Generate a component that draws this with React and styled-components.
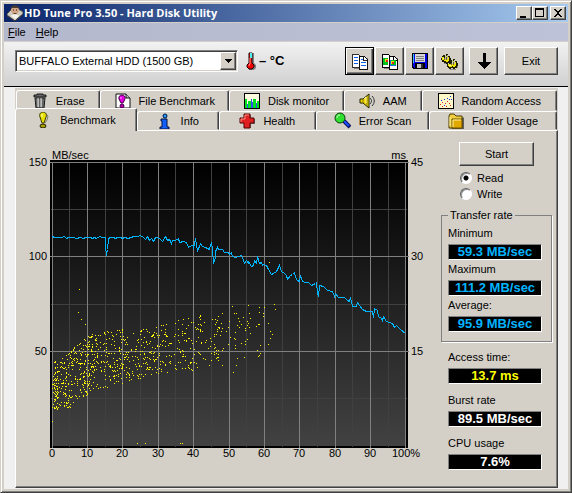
import { useState } from "react";
import styled, { createGlobalStyle, css } from "styled-components";


const App = () => {

    const [tab, setTab] = useState('Benchmark');
    const [mode, setMode] = useState('read');

    const renderTabs = (tabs) => tabs.map(({name, size, Icon}) => (
        <Tab
            key={name}
            type="button"
            role="tab"
            aria-selected={tab === name}
            $size={size}
            $active={tab === name}
            onClick={() => setTab(name)}
        >
            <Icon />
            {name}
        </Tab>
    ))

    return (
        <>
            <GlobalStyle />
            <Window>
                <TitleBar>
                    <DiskIcon />
                    <Title>HD Tune Pro 3.50 - Hard Disk Utility</Title>
                    <CaptionButton aria-label="Minimize"><MinimizeIcon /></CaptionButton>
                    <CaptionButton aria-label="Maximize"><MaximizeIcon /></CaptionButton>
                    <CaptionButton aria-label="Close" $apart><CloseIcon /></CaptionButton>
                </TitleBar>

                <MenuBar>
                    <MenuItem type="button"><u>F</u>ile</MenuItem>
                    <MenuItem type="button"><u>H</u>elp</MenuItem>
                </MenuBar>

                <Toolbar>
                    <DriveBox>
                        <DriveSelect aria-label="Drive">
                            <option>BUFFALO External HDD (1500 GB)</option>
                        </DriveSelect>
                        <DriveArrow>
                            <svg width="7" height="4" shapeRendering="crispEdges"><path d="M0 0h7v1h-1v1h-1v1h-1v1h-1v-1h-1v-1h-1v-1h-1z" /></svg>
                        </DriveArrow>
                    </DriveBox>
                    <Temperature>
                        <ThermometerIcon />
                        – °C
                    </Temperature>
                    <ToolGroup>
                        <ToolButton aria-label="Copy info" $focused><CopyIcon /></ToolButton>
                        <ToolButton aria-label="Copy screenshot"><CopyShotIcon /></ToolButton>
                        <ToolButton aria-label="Save"><SaveIcon /></ToolButton>
                        <ToolButton aria-label="Options"><OptionsIcon /></ToolButton>
                    </ToolGroup>
                    <ToolButton aria-label="Minimize to tray"><DownIcon /></ToolButton>
                    <ExitButton>Exit</ExitButton>
                </Toolbar>

                <Body>
                    <TabArea>
                        <TabRow role="tablist" $back>{renderTabs(backTabs)}</TabRow>
                        <TabRow role="tablist">{renderTabs(frontTabs)}</TabRow>
                        <Panel>
                            <ChartCell>
                                <Chart />
                            </ChartCell>
                            <Side>
                                <StartButton>Start</StartButton>
                                <Modes>
                                    <Mode>
                                        <Radio type="radio" name="mode" checked={mode === 'read'} onChange={() => setMode('read')} />
                                        Read
                                    </Mode>
                                    <Mode>
                                        <Radio type="radio" name="mode" checked={mode === 'write'} onChange={() => setMode('write')} />
                                        Write
                                    </Mode>
                                </Modes>
                                <Group>
                                    <Legend>Transfer rate</Legend>
                                    <Reading id="min" label="Minimum" value="59.3 MB/sec" color="#00b4ff" />
                                    <Reading id="max" label="Maximum" value="111.2 MB/sec" color="#00b4ff" />
                                    <Reading id="avg" label="Average:" value="95.9 MB/sec" color="#00b4ff" />
                                </Group>
                                <Readings>
                                    <Reading id="access" label="Access time:" value="13.7 ms" color="#ffff00" />
                                    <Reading id="burst" label="Burst rate" value="89.5 MB/sec" color="#ffffff" />
                                    <Reading id="cpu" label="CPU usage" value="7.6%" color="#ffffff" />
                                </Readings>
                            </Side>
                        </Panel>
                    </TabArea>
                </Body>
            </Window>
        </>
    );
}

export default App;


const Reading = ({id, label, value, color}) => (
    <ReadingBox>
        <label htmlFor={id}>{label}</label>
        <Value id={id} $color={color}>{value}</Value>
    </ReadingBox>
)


//Transfer rate curve, plot area is 354 x 284
const rateLine = `0,74 2,75 9,75 12,74 14,76 16,75 21,75 24,76 28,75 31,76 33,75 38,75 40,76 42,75 44,76 47,74 50,75
53,75 53,83 54,93 55,87 56,77 57,75 61,75 63,76 65,75 68,75 70,76 72,75 76,76 78,75 82,74 85,74 88,73 91,75 93,77 95,74
97,78 99,76 101,79 103,75 105,75 108,77 110,79 113,74 115,78 117,77 119,81 120,78 123,78 126,76 127,80 131,79 134,80
136,85 139,83 141,83 141,86 143,76 144,82 145,89 148,81 150,84 153,85 155,86 157,87 158,83 159,80 160,87 161,101
163,95 163,89 165,85 166,87 170,87 172,90 176,90 177,92 179,90 180,94 183,95 189,93 191,98 192,101 194,98 196,101
196,99 199,104 201,103 202,98 204,101 205,94 207,101 209,100 210,103 211,102 214,103 216,107 219,112 221,111 224,109
227,103 229,109 232,111 234,113 235,117 238,113 240,112 242,110 243,115 245,118 247,119 248,113 250,119 253,120
256,120 259,123 263,121 264,120 265,130 266,134 267,123 271,124 275,128 280,129 282,134 283,131 286,135 292,135
295,138 297,139 298,135 300,144 304,144 305,140 307,143 310,147 314,149 320,149 321,155 322,146 325,148 326,154
329,156 330,158 331,154 334,159 340,161 342,165 344,163 348,167 353,171`

//Access time samples that lie away from the main cloud
const looseDots = [
    [27,127],[26,150],[29,157],[33,162],[85,281],[93,281],[128,281],[130,281],[0,259],[217,100],
    [164,160],[163,162],[166,154],[170,151],[165,158],[165,169],[164,172],[169,161],[167,165],[170,166],[169,169],
    [168,173],[174,169],[176,165],[177,159],[180,144],[182,151],[184,151],[186,156],[187,159],[185,163],[187,165],
    [189,162],[178,175],[182,176],[183,177],[183,170],[183,183],[189,181],[176,182],[183,186],[191,155],[193,166],
    [193,168],[195,159],[196,161],[197,151],[196,143],[198,156],[195,163],[197,165],[198,171],[195,177],[193,179],
    [193,182],[164,188],[166,188],[171,186],[164,196],[165,195],[170,188],[170,203],[185,196],[184,203],[192,195],
    [181,210],[207,145],[212,145],[211,151],[211,154],[207,150],[206,162],[207,162],[204,164],[222,142],[223,147],
    [216,161],[218,169],[220,172],[218,176],[216,182],[208,183],[205,188],[208,191],[207,193],[206,194],
]

//from x, to x, upper and lower edge at both ends, number of samples
const clouds = [
    [0, 5, 212, 206, 248, 250, 45],
    [2, 18, 200, 189, 250, 245, 110],
    [18, 40, 187, 170, 245, 230, 165],
    [40, 72, 172, 166, 230, 220, 165],
    [72, 106, 171, 163, 221, 211, 140],
    [106, 140, 163, 154, 213, 208, 100],
    [140, 167, 154, 148, 209, 200, 60],
]

const makeDots = () => {
    let seed = 7;
    const random = () => {
        seed = (seed * 16807) % 2147483647;
        return seed / 2147483647;
    }
    const dots = [...looseDots];
    clouds.forEach(([x1, x2, top1, top2, low1, low2, count]) => {
        for (let i = 0; i < count; i++) {
            const t = random();
            const top = top1 + (top2 - top1) * t;
            const low = low1 + (low2 - low1) * t;
            dots.push([Math.round(x1 + (x2 - x1) * t), Math.round(top + (low - top) * random())]);
        }
    })
    return dots.map(([x, y]) => `M${x} ${y}h1v1h-1z`).join('');
}

const dotsPath = makeDots();

const columns = Array.from({length: 21}, (_, i) => Math.floor(i * 17.7));
const rows = [0, 47, 94, 142, 189, 236];

const Chart = () => (
    <ChartSvg viewBox="-36 -31 420 355" role="img" aria-label="Transfer rate and access time">
        <defs>
            <linearGradient id="plot" x1="0" y1="0" x2="0" y2="1">
                <stop offset="0" stopColor="#000" />
                <stop offset="1" stopColor="#424242" />
            </linearGradient>
        </defs>
        <g shapeRendering="crispEdges">
            <rect x="-2" y="-2" width="358" height="288" fill="#000" />
            <rect x="0" y="0" width="354" height="284" fill="url(#plot)" />
            {rows.map((y, i) => i % 2 === 1 && <rect key={y} x="-1" y={y} width="356" height="1" fill="#404040" />)}
            {columns.map((x, i) => i % 2 === 1 && <rect key={x} x={x} y="0" width="1" height="285" fill="#404040" />)}
            {rows.map((y, i) => i % 2 === 0 && <rect key={y} x="-2" y={y} width="359" height="1" fill="#808080" />)}
            {columns.map((x, i) => i % 2 === 0 && <rect key={x} x={i === 20 ? 353 : x} y="0" width="1" height="286" fill="#808080" />)}
            <path d={dotsPath} fill="#ffff00" />
            <polyline points={rateLine} transform="translate(.5 .5)" fill="none" stroke="#00b4ff" />
        </g>
        <AxisText x="0" y="-3">MB/sec</AxisText>
        <AxisText x="354" y="-3" textAnchor="end">ms</AxisText>
        {['150', '100', '50'].map((text, i) => (
            <AxisText key={text} x="-5" y={4 + rows[i * 2]} textAnchor="end">{text}</AxisText>
        ))}
        {['45', '30', '15'].map((text, i) => (
            <AxisText key={text} x="359" y={4 + rows[i * 2]}>{text}</AxisText>
        ))}
        {columns.filter((x, i) => i % 2 === 0).map((x, i) => (
            <AxisText key={x} x={x} y="295" textAnchor="middle">{i === 10 ? '100%' : i * 10}</AxisText>
        ))}
    </ChartSvg>
)


//Icons
const Icon = ({size = 16, children, ...rest}) => (
    <svg width={size} height={size} viewBox={`0 0 ${size} ${size}`} aria-hidden="true" {...rest}>{children}</svg>
)

const DiskIcon = () => (
    <Icon>
        <path d="M0 9l5-5h6l5 3v2l-8 7-8-6z" fill="#d0ccc0" stroke="#5c5a58" />
        <path d="M0 11l8 5 8-7" fill="none" stroke="#34343c" />
        <circle cx="8" cy="5" r="4" fill="#d0a484" />
        <path d="M4 4c0-5 8-5 8 0l-1-1H5z" fill="#4a3a30" />
        <path d="M6 8h4l-1 1H7z" fill="#6a4030" />
        <path d="M4 11c1-2 7-2 8 0l-4 3z" fill="#f4f2ec" />
        <path d="M6 5h1M9 5h1" stroke="#302018" />
    </Icon>
)

const MinimizeIcon = () => (
    <Icon size={10} shapeRendering="crispEdges"><path d="M1 8h6v2h-6z" /></Icon>
)

const MaximizeIcon = () => (
    <Icon size={10} shapeRendering="crispEdges"><path d="M0 0h9v9H0zM1 2v6h7V2z" fillRule="evenodd" /></Icon>
)

const CloseIcon = () => (
    <Icon size={10} shapeRendering="crispEdges">
        <path d="M1 1h2v1h1v1h2V2h1V1h2v1H8v1H7v1H6v2h1v1h1v1h1v1H7V8H6V7H4v1H3v1H1V8h1V7h1V6h1V4H3V3H2V2H1z" />
    </Icon>
)

const ThermometerIcon = () => (
    <svg width="10" height="18" viewBox="0 0 10 18" aria-hidden="true">
        <path d="M5 1h3v10l2 2v3l-2 2H3z" fill="#808080" />
        <path d="M3 1h3v10l2 2v2l-2 2H3l-2-2v-2l2-2z" fill="#f00000" stroke="#200000" />
        <path d="M4 1h2v5H4z" fill="#50f0f0" />
        <path d="M4 6v6l-1 1v1" fill="none" stroke="#ff9090" />
    </svg>
)

const CopyIcon = () => (
    <Icon size={17} shapeRendering="crispEdges">
        <path d="M3 14h5v2H3zM15 5h2v12H9v-1h6z" fill="#808080" />
        <path d="M1 1h6l2 2v11H1z" fill="#fff" stroke="#303030" />
        <path d="M8 3h5l3 3v10H8z" fill="#fff" stroke="#101010" />
        <path d="M12 3v4h4" fill="none" stroke="#202020" />
        <path d="M3 4h4v1H3zM3 7h4v1H3zM3 10h4v1H3zM10 6h2v1h-2zM10 9h5v1h-5zM10 12h5v1h-5z" fill="#1060f0" />
    </Icon>
)

const CopyShotIcon = () => (
    <Icon size={17} shapeRendering="crispEdges">
        <path d="M3 14h5v2H3zM15 5h2v12H9v-1h6z" fill="#808080" />
        <path d="M1 1h6l2 2v11H1z" fill="#fff" stroke="#000" />
        <path d="M2 5h5v7H2z" fill="#00c020" />
        <path d="M4 6h3v3H4z" fill="#f0e000" />
        <path d="M5 7h2v2H5z" fill="#e02020" />
        <path d="M8 3h5l3 3v10H8z" fill="#fff" stroke="#000" />
        <path d="M12 3v4h4" fill="none" stroke="#000" />
        <path d="M9 7h6v6H9z" fill="#2070e0" />
        <path d="M10 7h5v5h-5z" fill="#00c020" />
        <path d="M10 8h3v3h-3z" fill="#f0e000" />
        <path d="M11 9h2v2h-2z" fill="#e02020" />
    </Icon>
)

const SaveIcon = () => (
    <Icon shapeRendering="crispEdges">
        <path d="M0 0h15l1 1v15H1l-1-1z" fill="#000" />
        <path d="M1 1h14v14H2l-1-1z" fill="#0000e8" />
        <path d="M1 1h1v9H1z" fill="#40c0ff" />
        <path d="M3 1h10v8H3z" fill="#d8d8d8" />
        <path d="M4 3h8v1H4zM4 5h8v1H4zM4 7h8v1H4z" fill="#808080" />
        <path d="M3 10h10v5H3z" fill="#000" />
        <path d="M5 11h6v4H5z" fill="#c0c0c0" />
        <path d="M9 11h2v4H9z" fill="#303030" />
    </Icon>
)

const OptionsIcon = () => (
    <Icon size={17} shapeRendering="crispEdges">
        <path d="M3 10h3v1H3zM9 16h6v1H9zM15 13h2v2h-2z" fill="#8c8c8c" />
        <path d="M1 3h1V2h2v1h1V1h2v2h2v2h1v4H9v1H7v1H5v-1H3V9H1V7H0V5h1z" fill="#202000" />
        <path d="M1 4h2v1h2V3h2v1h1v4H7v1H5V8H3V7H1z" fill="#f0e400" />
        <path d="M4 3h1v3H4zM6 2h1v4H6z" fill="#b8b8a8" />
        <path d="M3 5h1v2H3zM5 4h1v3H5z" fill="#606040" />
        <path d="M2 5h1v1H2z" fill="#fffca0" />
        <path d="M8 8h1V7h2v1h1V6h2v2h2v2h1v3h-1v2h-2v1h-2v-1h-2v1H8v-1H7v-1H6v-3h2z" fill="#202000" />
        <path d="M7 11h3v-1h2V8h1v1h2v4h-1v1h-2v-1h-1v1H8v-1H7z" fill="#f0e400" />
        <path d="M11 7h1v4h-1zM13 7h1v4h-1z" fill="#c8c8b8" />
        <path d="M10 10h1v2h-1zM12 9h1v3h-1z" fill="#606040" />
        <path d="M8 12h2v1H8z" fill="#fffca0" />
    </Icon>
)

const DownIcon = () => (
    <Icon shapeRendering="crispEdges">
        <path d="M7 0h3v9h5v1h-1v1h-1v1h-1v1h-1v1h-1v1H9v1H8v-1H7v-1H6v-1H5v-1H4v-1H3v-1H2V9h5z" />
    </Icon>
)

const TrashIcon = () => (
    <Icon>
        <path d="M2 2h3V1h6v1h3v2H2z" fill="#686868" stroke="#181818" />
        <path d="M3 5h10l-1 10H4z" fill="#989898" stroke="#181818" />
        <path d="M5 5v10M8 5v10M11 5v10" stroke="#303030" />
        <path d="M6 5v9M9 5v9" stroke="#e0e0e0" />
    </Icon>
)

const FileMarkIcon = () => (
    <Icon>
        <path d="M1 1h10l4 4v10H1z" fill="#fff" stroke="#101010" />
        <path d="M11 1v4h4" fill="#c0c0c0" stroke="#101010" />
        <path d="M7 2a3 3 0 0 1 3 4l-2 4H6L4 6a3 3 0 0 1 3-4z" fill="#e000e0" stroke="#400040" />
        <circle cx="7" cy="13" r="2" fill="#b000b0" stroke="#400040" />
        <path d="M6 4v2" stroke="#ffa0ff" />
    </Icon>
)

const MonitorIcon = () => (
    <Icon shapeRendering="crispEdges">
        <path d="M0 0h16v16H0z" fill="#000" />
        <path d="M1 1h14v14H1z" fill="#fffce0" />
        <path d="M1 6h2v9H1zM4 8h3v7H4zM9 6h3v9H9zM13 8h2v7h-2z" fill="#00e020" />
        <path d="M3 11h1v4H3zM7 6h1v9H7zM8 9h1v6H8zM12 10h1v5h-1z" fill="#3050f0" />
    </Icon>
)

const SpeakerIcon = () => (
    <Icon>
        <path d="M1 6h3l6-5v14l-6-5H1z" fill="#f0d800" stroke="#202000" />
        <path d="M4 6v4M8 3v10" stroke="#8a7a00" />
        <path d="M5 6l2-2v6" stroke="#fff8a0" fill="none" />
        <path d="M11 5c2 2 2 4 0 6M13 3c3 3 3 7 0 10" fill="none" stroke="#303030" />
    </Icon>
)

const RandomIcon = () => (
    <Icon shapeRendering="crispEdges">
        <path d="M0 0h16v16H0z" fill="#000" />
        <path d="M1 1h14v14H1z" fill="#fff8c8" />
        <path d="M2 11h1v1H2zM4 9h1v1H4zM4 13h1v1H4zM7 10h1v1H7zM9 8h1v1H9zM11 10h1v1h-1zM8 13h1v1H8zM12 12h1v1h-1z" fill="#e02020" />
        <path d="M3 7h1v1H3zM6 6h1v1H6zM9 5h1v1H9zM12 3h1v1h-1zM13 6h1v1h-1zM6 12h1v1H6zM11 6h1v1h-1z" fill="#2030e0" />
    </Icon>
)

const MarkIcon = () => (
    <Icon>
        <path d="M9 1l3 3-1 4-2 3" fill="none" stroke="#808060" />
        <path d="M7 0c3 0 4 3 3 5l-2 6H6L4 5c-1-2 0-5 3-5z" fill="#e8e000" stroke="#3a3800" />
        <ellipse cx="7" cy="14" rx="3" ry="2" fill="#a8a000" stroke="#202000" />
        <path d="M6 2v3" stroke="#ffffc0" />
    </Icon>
)

const InfoIcon = () => (
    <Icon>
        <path d="M4 6h6v8h2v2H3v-2h2V8H4z" fill="#1060ff" stroke="#001040" />
        <circle cx="8" cy="3" r="2" fill="#20a0ff" stroke="#001040" />
    </Icon>
)

const HealthIcon = () => (
    <Icon>
        <path d="M6 2h6v4h4v5h-4v4H6" fill="#707070" />
        <path d="M5 1h6v4h4v5h-4v5H5v-5H1V5h4z" fill="#e02020" stroke="#500000" />
        <path d="M6 6V2h4M2 9V6h4" fill="none" stroke="#ff9080" />
    </Icon>
)

const SearchIcon = () => (
    <Icon size={17}>
        <path d="M10 9l6 6" stroke="#001060" strokeWidth="4" />
        <path d="M10 9l5 5" stroke="#2050ff" strokeWidth="2" />
        <circle cx="6" cy="6" r="5" fill="#30e030" stroke="#084008" />
        <path d="M3 6c0-2 1-3 3-3" fill="none" stroke="#d0ffd0" />
    </Icon>
)

const FolderIcon = () => (
    <Icon>
        <path d="M15 4l1 1v11H3z" fill="#606060" />
        <path d="M1 3l1-2h4l2 2h6v12H1z" fill="#f0d040" stroke="#4a3800" />
        <path d="M4 6h10v9H4z" fill="#e0a800" stroke="#6a5000" />
        <path d="M5 14V7h8M2 13V4" fill="none" stroke="#fff0a0" />
    </Icon>
)

const backTabs = [
    {name: 'Erase', size: 84, Icon: TrashIcon},
    {name: 'File Benchmark', size: 129, Icon: FileMarkIcon},
    {name: 'Disk monitor', size: 115, Icon: MonitorIcon},
    {name: 'AAM', size: 77, Icon: SpeakerIcon},
    {name: 'Random Access', size: 136, Icon: RandomIcon},
]

const frontTabs = [
    {name: 'Benchmark', size: 122, Icon: MarkIcon},
    {name: 'Info', size: 81, Icon: InfoIcon},
    {name: 'Health', size: 97, Icon: HealthIcon},
    {name: 'Error Scan', size: 113, Icon: SearchIcon},
    {name: 'Folder Usage', size: 128, Icon: FolderIcon},
]


const GlobalStyle = createGlobalStyle`
    * {
        box-sizing: border-box;
    }
    body {
        margin: 0;
        background-color: #d4d0c8;
        color: black;
        font: 11px/14px "Liberation Sans", Arial, sans-serif;
    }
    button, select {
        margin: 0;
        padding: 0;
        border: none;
        border-radius: 0;
        background: none;
        color: inherit;
        font: inherit;
    }
    svg {
        display: block;
        flex-shrink: 0;
    }
`

const raised = css`
    background-color: #d4d0c8;
    border: 1px solid;
    border-color: white #404040 #404040 white;
    box-shadow: inset -1px -1px 0 #808080;
`

const Window = styled.main`
    padding: 3px;
    background-color: #d4d0c8;
    border: 1px solid;
    border-color: #d4d0c8 #404040 #404040 #d4d0c8;
    box-shadow: inset 1px 1px 0 white, inset -1px -1px 0 #808080;
`

const TitleBar = styled.header`
    display: flex;
    align-items: center;
    height: 18px;
    padding: 0 2px 0 3px;
    background: linear-gradient(to right, #0a246a, #a6caf0);
`

const Title = styled.h1`
    flex: 1;
    margin: 0 0 0 1px;
    color: white;
    font: bold 11px/18px "Open Sans", "Noto Sans", sans-serif;
    white-space: nowrap;
    overflow: hidden;
`

const CaptionButton = styled.button`
    ${raised}
    display: flex;
    align-items: center;
    justify-content: center;
    width: 16px;
    height: 14px;
    margin-left: ${({$apart}) => $apart ? '2px' : '0'};
`

const MenuBar = styled.nav`
    display: flex;
    gap: 10px;
    height: 20px;
    padding: 0 4px;
    border: solid #d4d0c8;
    border-width: 1px 0;
    background: linear-gradient(to right, #b3b8cc, #bec2d8);
`

const MenuItem = styled.button`
    line-height: 18px;
`

const Toolbar = styled.div`
    display: flex;
    align-items: center;
    padding: 5px 10px 11px 11px;
    border-bottom: 1px solid black;
    background: linear-gradient(#f2f2f2, #d0d0d0);
`

const DriveBox = styled.div`
    display: flex;
    flex: 0 1 223px;
    height: 22px;
    padding: 1px;
    background-color: white;
    border: 1px solid;
    border-color: #808080 white white #808080;
    box-shadow: inset 1px 1px 0 #404040, inset -1px -1px 0 #d4d0c8;
`

const DriveSelect = styled.select`
    flex: 1;
    min-width: 0;
    padding-left: 2px;
    appearance: none;
    outline: none;
`

const DriveArrow = styled.span`
    ${raised}
    display: flex;
    align-items: center;
    justify-content: center;
    width: 16px;
    pointer-events: none;
`

const Temperature = styled.div`
    display: flex;
    flex: 1;
    align-items: center;
    gap: 3px;
    margin-left: 8px;
    font-size: 13px;
    font-weight: bold;
    white-space: nowrap;
`

const ToolGroup = styled.div`
    display: flex;
    gap: 1px;
    margin-right: 5px;
`

const ToolButton = styled.button`
    ${raised}
    display: flex;
    align-items: center;
    justify-content: center;
    width: 29px;
    height: 28px;
    ${({$focused}) => $focused && css`
        border-color: black;
        box-shadow: inset 1px 1px 0 white, inset -1px -1px 0 #404040, inset -2px -2px 0 #808080;
    `}
`

const ExitButton = styled.button`
    ${raised}
    width: 54px;
    height: 28px;
    margin-left: 6px;
`

const Body = styled.div`
    padding: 1px 10px 1px 11px;
    background-color: #f0f0f0;
`

const TabArea = styled.div`
    padding-top: 2px;
    background-color: #d4d0c8;
`

const TabRow = styled.div`
    display: flex;
    height: ${({$back}) => $back ? '21px' : '19px'};
    padding: ${({$back}) => $back ? '0 1px' : '0 1px 0 0'};
`

const Tab = styled.button`
    display: flex;
    flex: ${({$size}) => `${$size} ${$size} 0`};
    align-items: center;
    justify-content: center;
    gap: 8px;
    border: 1px solid;
    border-color: white #404040 transparent white;
    border-radius: 3px 2px 0 0;
    box-shadow: inset -1px 0 0 #808080;
    background-color: #d4d0c8;
    white-space: nowrap;
    ${({$active}) => $active && css`
        position: relative;
        z-index: 1;
        margin: -3px 0 -1px;
        border-bottom: none;
    `}
`

const Panel = styled.section`
    display: flex;
    gap: 5px;
    padding-right: 4px;
    border: 1px solid;
    border-color: white #404040 #404040 white;
    box-shadow: inset -1px -1px 0 #808080;
    border-right-width: 1px;
    padding-right: 5px;
    padding-bottom: 1px;
`

const ChartCell = styled.div`
    flex: 1;
    min-width: 0;
`

const ChartSvg = styled.svg`
    width: 100%;
    height: auto;
`

const AxisText = styled.text`
    font: 11px "Liberation Sans", Arial, sans-serif;
`

const Side = styled.div`
    display: flex;
    flex-flow: column;
    width: 111px;
    padding-top: 11px;
`

const StartButton = styled.button`
    ${raised}
    align-self: center;
    width: 75px;
    height: 24px;
`

const Modes = styled.div`
    display: flex;
    flex-flow: column;
    gap: 2px;
    padding: 5px 0 7px 19px;
`

const Mode = styled.label`
    display: flex;
    align-items: center;
    gap: 5px;
`

const Radio = styled.input`
    appearance: none;
    width: 12px;
    height: 12px;
    margin: 0;
    border: 1px solid;
    border-color: #606060 white white #606060;
    border-radius: 50%;
    background-color: white;
    box-shadow: inset 1px 1px 0 #909090;
    &:checked{
        background-image: radial-gradient(circle, black 2px, transparent 3px);
    }
`

const Group = styled.fieldset`
    display: flex;
    flex-flow: column;
    gap: 2px;
    min-width: 0;
    margin: 0;
    padding: 4px 9px 9px 6px;
    border: 1px solid #808080;
    box-shadow: 1px 1px 0 white;
`

const Legend = styled.legend`
    padding: 0 2px;
`

const Readings = styled.div`
    display: flex;
    flex-flow: column;
    gap: 9px;
    padding: 8px 10px 0 7px;
`

const ReadingBox = styled.div`
    display: flex;
    flex-flow: column;
    gap: 4px;
`

const Value = styled.output`
    height: 16px;
    border: 1px solid;
    border-color: #808080 white white #808080;
    background-color: black;
    color: ${({$color}) => $color};
    font-size: 13px;
    font-weight: bold;
    line-height: 14px;
    text-align: center;
    white-space: nowrap;
`
